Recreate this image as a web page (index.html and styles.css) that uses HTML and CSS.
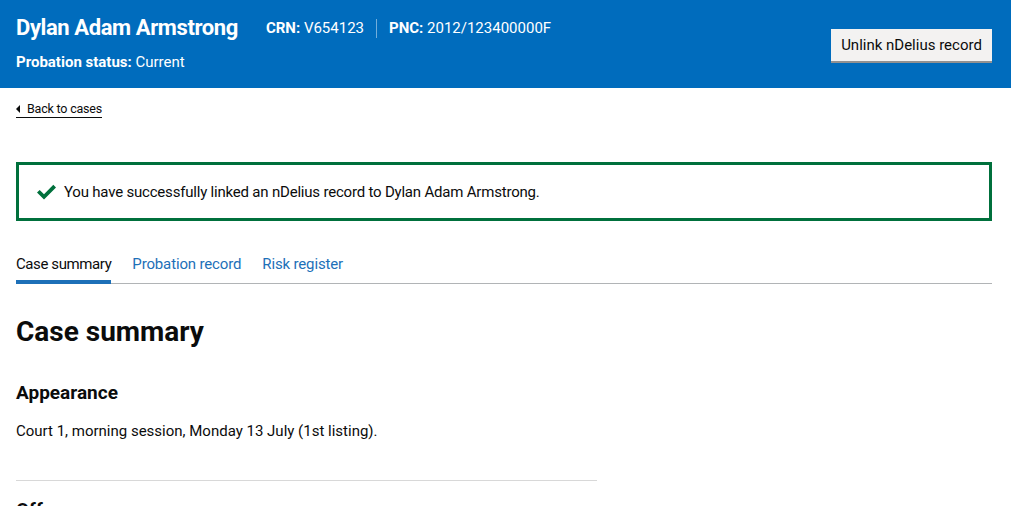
FILE: index.html
```html
<!DOCTYPE html>
<html lang="en">
<head>
<meta charset="utf-8">
<title>Case summary</title>
<link rel="stylesheet" href="styles.css">
</head>
<body>
<header class="banner">
  <div class="banner-main">
    <div class="identity">
      <h1 class="name">Dylan Adam Armstrong</h1>
      <div class="ids">
        <span class="id"><b>CRN:</b> V654123</span>
        <span class="sep"></span>
        <span class="id"><b>PNC:</b> 2012/123400000F</span>
      </div>
    </div>
    <p class="status"><b>Probation status:</b> Current</p>
  </div>
  <button class="btn">Unlink nDelius record</button>
</header>

<main class="page">
  <a class="back" href="#"><span class="tri"></span>Back to cases</a>

  <div class="notice">
    <svg class="tick" width="19" height="16" viewBox="0 0 19 16" aria-hidden="true">
      <path d="M0 8.6 L2.7 6 L7 10.2 L16.3 0.8 L19 3.4 L7 15.4 Z" fill="#00703c"/>
    </svg>
    <span>You have successfully linked an nDelius record to Dylan Adam Armstrong.</span>
  </div>

  <nav class="tabs">
    <a class="tab active" href="#">Case summary</a>
    <a class="tab" href="#">Probation record</a>
    <a class="tab" href="#">Risk register</a>
  </nav>

  <section class="content">
    <h2 class="h1">Case summary</h2>
    <h3 class="h2">Appearance</h3>
    <p class="body">Court 1, morning session, Monday 13 July (1st listing).</p>
    <hr class="rule">
    <h3 class="h2">Offences</h3>
  </section>
</main>
</body>
</html>
```

FILE: styles.css
```css
* { box-sizing: border-box; }
html, body { margin: 0; padding: 0; }
body {
  font-family: "Roboto", "Liberation Sans", Arial, sans-serif;
  color: #0b0c0c;
  background: #fff;
  overflow: hidden;
  height: 506px;
}
.banner {
  background: #006cbd;
  color: #fff;
  height: 88px;
  display: flex;
  justify-content: space-between;
  align-items: flex-start;
  padding: 0 19px 0 16px;
}
.banner-main { padding-top: 13px; }
.identity { display: flex; align-items: center; }
.name {
  margin: 0;
  font-size: 22px;
  font-weight: 700;
  line-height: 30px;
  letter-spacing: -0.4px;
}
.ids { display: flex; align-items: center; margin-left: 28px; font-size: 15px; }
.id b { font-weight: 700; }
.sep {
  display: inline-block;
  width: 1px;
  height: 19px;
  background: rgba(255,255,255,0.45);
  margin: 0 12px;
}
.status { margin: 9px 0 0; font-size: 15px; line-height: 20px; }
.btn {
  margin-top: 29px;
  background: #f3f2f1;
  color: #0b0c0c;
  border: 0;
  box-shadow: 0 2px 0 #929191;
  font-family: inherit;
  font-size: 15px;
  height: 32px;
  padding: 0 10px;
  width: 161px;
}
.page { padding: 0 19px 0 16px; }
.back {
  display: inline-flex;
  align-items: center;
  margin-top: 12px;
  font-size: 12.5px;
  letter-spacing: -0.2px;
  color: #0b0c0c;
  text-decoration: none;
  border-bottom: 1px solid #0b0c0c;
  line-height: 17px;
}
.tri {
  width: 0; height: 0;
  border-top: 4px solid transparent;
  border-bottom: 4px solid transparent;
  border-right: 4px solid #0b0c0c;
  margin-right: 7px;
}
.notice {
  margin-top: 44px;
  border: 3px solid #00703c;
  height: 59px;
  display: flex;
  align-items: center;
  padding-left: 18px;
  font-size: 15px;
  letter-spacing: -0.2px;
}
.tick { margin-right: 8px; }
.tabs {
  margin-top: 26px;
  display: flex;
  border-bottom: 1px solid #b1b4b6;
  gap: 21px;
}
.tab {
  font-size: 15px;
  letter-spacing: -0.15px;
  color: #1d70b8;
  text-decoration: none;
  padding: 7px 0 9px;
  line-height: 20px;
}
.tab.active { color: #0b0c0c; letter-spacing: -0.4px; border-bottom: 4px solid #1d70b8; margin-bottom: -1px; padding-bottom: 6px; }
.content { width: 581px; }
.h1 { margin: 31px 0 0; font-size: 28px; line-height: 34px; font-weight: 700; }
.h2 { margin: 31px 0 0; font-size: 19px; line-height: 25px; font-weight: 700; }
.body { margin: 16px 0 0; font-size: 15px; line-height: 20px; }
.rule { margin: 39px 0 0; border: 0; border-top: 1px solid #d8d8d8; }
.rule + .h2 { margin-top: 16px; }
```
